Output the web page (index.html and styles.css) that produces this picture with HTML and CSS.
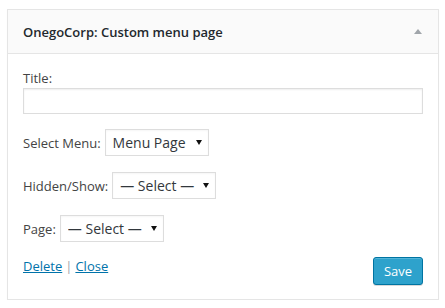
FILE: index.html
```html
<!DOCTYPE html>
<html>
<head>
<meta charset="utf-8">
<link rel="stylesheet" href="styles.css">
</head>
<body>
<div class="widget">
  <div class="widget-top">
    <h3 class="widget-title">OnegoCorp: Custom menu page</h3>
    <svg class="toggle" width="8" height="5" viewBox="0 0 8 5"><polygon points="4,0 8,5 0,5" fill="#a0a5aa"/></svg>
  </div>
  <div class="widget-inside">
    <label class="label-block" for="t">Title:</label>
    <input id="t" class="text-input" type="text">
    <div class="row first">
      <span class="label">Select Menu:</span>
      <span class="select-wrap"><select class="select"><option>Menu Page</option></select><svg class="arrow" width="6" height="5" viewBox="0 0 6 5"><polygon points="0,0 6,0 3,5" fill="#111"/></svg></span>
    </div>
    <div class="row">
      <span class="label">Hidden/Show:</span>
      <span class="select-wrap"><select class="select"><option>— Select —</option></select><svg class="arrow" width="6" height="5" viewBox="0 0 6 5"><polygon points="0,0 6,0 3,5" fill="#111"/></svg></span>
    </div>
    <div class="row">
      <span class="label">Page:</span>
      <span class="select-wrap"><select class="select"><option>— Select —</option></select><svg class="arrow" width="6" height="5" viewBox="0 0 6 5"><polygon points="0,0 6,0 3,5" fill="#111"/></svg></span>
    </div>
    <div class="actions">
      <div class="links"><a href="#">Delete</a><span class="sep">|</span><a href="#">Close</a></div>
      <button class="save" type="button">Save</button>
    </div>
  </div>
</div>
</body>
</html>
```
FILE: styles.css
```css
html, body {
  margin: 0;
  padding: 0;
  background: #fff;
}
body {
  padding: 9px 0 0 7px;
  font-family: "Open Sans", "Liberation Sans", sans-serif;
  font-size: 13px;
  color: #444;
}
.widget {
  width: 430px;
  border: 1px solid #e5e5e5;
  background: #fff;
  box-shadow: 0 1px 1px rgba(0,0,0,0.04);
}
.widget-top {
  height: 43px;
  background: #fafafa;
  border-bottom: 1px solid #e5e5e5;
  display: flex;
  align-items: center;
  justify-content: space-between;
  padding: 0 16px 0 15px;
}
.widget-title {
  margin: 0;
  font-size: 13px;
  font-weight: 600;
  color: #23282d;
  line-height: 20px;
}
.toggle {
  display: block;
}
.widget-inside {
  padding: 15px 15px 14px 15px;
}
.label-block {
  display: block;
  line-height: 18px;
  color: #444;
}
.text-input {
  display: block;
  box-sizing: border-box;
  width: 100%;
  height: 26px;
  margin: 1px 0 0 0;
  border: 1px solid #ddd;
  box-shadow: inset 0 1px 2px rgba(0,0,0,0.07);
  background: #fff;
  padding: 3px 5px;
  font: inherit;
}
.row {
  display: flex;
  align-items: center;
  gap: 4px;
  margin-top: 16px;
}
.row.first {
  margin-top: 15px;
}
.label {
  line-height: 18px;
  color: #444;
}
.select-wrap {
  position: relative;
  display: block;
  width: 104px;
  height: 27px;
}
.select {
  appearance: none;
  -webkit-appearance: none;
  box-sizing: border-box;
  width: 104px;
  height: 27px;
  margin: 0;
  border: 1px solid #ddd;
  border-radius: 0;
  background: #fff;
  padding: 0 0 0 7px;
  font-family: "Open Sans", "Liberation Sans", sans-serif;
  font-size: 14px;
  color: #32373c;
  line-height: 25px;
  box-shadow: inset 0 1px 2px rgba(0,0,0,0.04);
}
.arrow {
  position: absolute;
  right: 7px;
  top: 11px;
  pointer-events: none;
}
.actions {
  display: flex;
  justify-content: space-between;
  align-items: flex-start;
  margin-top: 15px;
}
.links {
  line-height: 18px;
}
.links a {
  color: #0073aa;
  text-decoration: underline;
}
.sep {
  color: #a0a5aa;
  margin: 0 3px 0 3px;
}
.save {
  margin-top: 0;
  box-sizing: border-box;
  width: 50px;
  height: 28px;
  border: 1px solid #0074a2;
  border-radius: 3px;
  background: #2ea2cc;
  color: #fff;
  font-family: "Open Sans", "Liberation Sans", sans-serif;
  font-size: 13px;
  padding: 0;
  box-shadow: inset 0 1px 0 rgba(120,200,230,0.5), 0 1px 0 rgba(0,0,0,0.15);
  cursor: pointer;
}
```
